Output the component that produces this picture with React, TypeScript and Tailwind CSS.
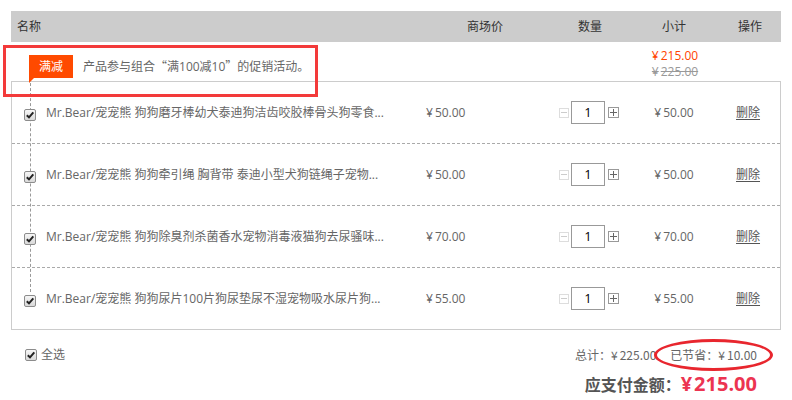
import React from "react";

type CartItem = {
  id: number;
  title: string;
  price: string;
};

const ITEMS: CartItem[] = [
  { id: 1, title: "Mr.Bear/宠宠熊 狗狗磨牙棒幼犬泰迪狗洁齿咬胶棒骨头狗零食...", price: "50.00" },
  { id: 2, title: "Mr.Bear/宠宠熊 狗狗牵引绳 胸背带 泰迪小型犬狗链绳子宠物...", price: "50.00" },
  { id: 3, title: "Mr.Bear/宠宠熊 狗狗除臭剂杀菌香水宠物消毒液猫狗去尿骚味...", price: "70.00" },
  { id: 4, title: "Mr.Bear/宠宠熊 狗狗尿片100片狗尿垫尿不湿宠物吸水尿片狗...", price: "55.00" },
];

// yuan sign with the little gap it has in the design
function Money({ value }: { value: string }) {
  return (
    <>
      <span className="mr-[2px]">¥</span>
      {value}
    </>
  );
}

function CheckBox() {
  return (
    <span className="relative flex h-[12px] w-[12px] shrink-0 items-center justify-center rounded-[2px] border border-[#8c8c8c] bg-gradient-to-b from-[#f6f6f6] to-[#d9d9d9]">
      <svg width="10" height="10" viewBox="0 0 10 10">
        <path d="M1.8 5.2 L4 7.4 L8.3 2.4" fill="none" stroke="#222" strokeWidth="2" />
      </svg>
    </span>
  );
}

function QtyControl() {
  return (
    <div className="flex w-[75px] items-center">
      <span className="flex h-[10px] w-[10px] items-center justify-center border border-[#dddddd]">
        <span className="h-px w-[6px] bg-[#cccccc]" />
      </span>
      <span className="ml-[2px] flex h-[23px] w-[34px] items-center justify-center border border-[#999] text-[13px] text-black">
        1
      </span>
      <span className="relative ml-[3px] flex h-[11px] w-[11px] items-center justify-center border border-[#999]">
        <span className="absolute h-px w-[7px] bg-[#666]" />
        <span className="absolute h-[7px] w-px bg-[#666]" />
      </span>
    </div>
  );
}

export default function App() {
  return (
    <div className="relative h-[400px] w-[792px] overflow-hidden bg-white px-[11px] pt-[11px] font-['Open_Sans','Noto_Sans_CJK_SC',sans-serif] text-[12px] text-[#666]">
      {/* dashed guide line from the badge down to the last checkbox */}
      <div className="absolute left-[30px] top-[78px] h-[214px] border-l border-dashed border-[#999]" />

      {/* Table header */}
      <div className="flex h-[31px] items-center bg-[#cccccc] text-[#333]">
        <div className="w-[434px] pl-[6px]">名称</div>
        <div className="w-[80px] text-center">商场价</div>
        <div className="ml-[40px] w-[50px] text-center">数量</div>
        <div className="ml-[34px] w-[50px] text-center">小计</div>
        <div className="ml-[26px] w-[50px] text-center">操作</div>
      </div>

      {/* Promotion row */}
      <div className="flex h-[39px]">
        <div className="flex w-[624px] items-center self-start pl-[18px] pt-[13px]">
          <span className="relative flex h-[23px] w-[44px] items-center justify-center bg-[#ff4a00] text-white">
            满减
            <span className="absolute left-0 top-full h-0 w-0 border-r-[5px] border-t-[5px] border-r-transparent border-t-[#ff4a00]" />
          </span>
          <span className="ml-[10px]">
            产品参与组合<span className="font-['Noto_Sans_CJK_SC']">“</span>满100减10
            <span className="font-['Noto_Sans_CJK_SC']">”</span>的促销活动。
          </span>
        </div>
        <div className="flex w-[80px] flex-col items-center pt-[6px] leading-[16px]">
          <span className="text-[#ff4400]">
            <Money value="215.00" />
          </span>
          <span className="text-[#999] line-through">
            <Money value="225.00" />
          </span>
        </div>
      </div>

      {/* Items */}
      <div className="border border-[#cccccc]">
        {ITEMS.map((item, idx) => (
          <div
            key={item.id}
            className={`flex h-[61px] items-center pl-[12px] ${
              idx < ITEMS.length - 1 ? "box-content border-b border-dashed border-[#aaa]" : ""
            }`}
          >
            <span className="mt-[4px]">
              <CheckBox />
            </span>
            <div className="ml-[10px] w-[380px] whitespace-nowrap">{item.title}</div>
            <div className="w-[133px]">
              <Money value={item.price} />
            </div>
            <QtyControl />
            <div className="w-[80px] text-center">
              <Money value={item.price} />
            </div>
            <a className="ml-[22px] text-[#555] underline underline-offset-2">删除</a>
          </div>
        ))}
      </div>

      {/* Footer */}
      <div className="mt-[17px] flex h-[16px] items-center leading-[16px]">
        <div className="flex items-center pl-[14px]">
          <CheckBox />
          <span className="ml-[4px]">全选</span>
        </div>
        <div className="ml-auto flex pr-[24px] font-['Noto_Sans_CJK_SC',sans-serif]">
          <span>
            总计：<Money value="225.00" />
          </span>
          <span className="ml-[14px]">
            已节省：<Money value="10.00" />
          </span>
        </div>
      </div>
      <div className="mt-[9px] flex h-[24px] items-center justify-end pr-[24px] font-bold">
        <span className="font-['Noto_Sans_CJK_SC',sans-serif] text-[16px] text-[#555]">应支付金额：</span>
        <span className="text-[20px] text-[#ec3451]">
          <Money value="215.00" />
        </span>
      </div>

      {/* annotation marks */}
      <div className="pointer-events-none absolute left-[3px] top-[45px] h-[52px] w-[315px] border-[3px] border-[#f33a3a]" />
      <div className="pointer-events-none absolute left-[654px] top-[339px] h-[32px] w-[119px] rounded-[50%] border-[3px] border-[#e8262e]" />
    </div>
  );
}
